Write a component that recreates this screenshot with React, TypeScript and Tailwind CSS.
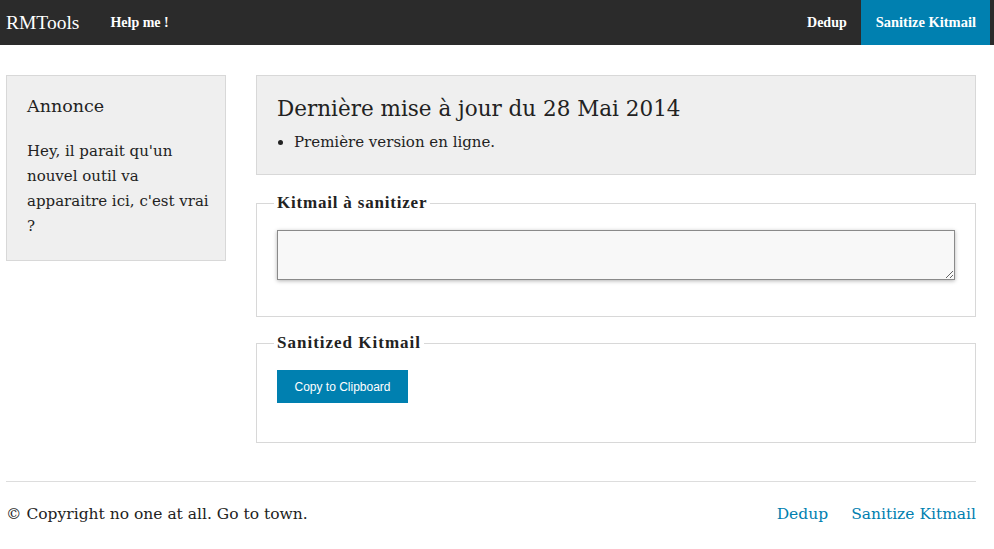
export default function App() {
  return (
    <div className="min-h-[549px] bg-white text-[#222] font-['DejaVu_Serif',serif]">
      <nav className="h-[45px] bg-[#2b2b2b] flex items-stretch pr-[4px] font-['Liberation_Serif',serif]">
        <a className="text-white text-[19.5px] flex items-center pl-[6px] pr-[31px]">RMTools</a>
        <a className="text-white text-[14px] font-bold flex items-center">Help me !</a>
        <div className="ml-auto flex items-stretch">
          <a className="text-white text-[14px] font-bold flex items-center px-[14px]">Dedup</a>
          <a className="text-white text-[14.5px] font-bold flex items-center pl-[15px] pr-[14px] bg-[#0080b0]">Sanitize Kitmail</a>
        </div>
      </nav>

      <div className="w-[970px] ml-[6px]">
        <div className="flex gap-[30px] mt-[30px] items-start">
          <aside className="w-[220px] shrink-0 bg-[#efefef] border border-[#d8d8d8] pl-[20px] pr-[14px] pt-[18px] pb-[21px]">
            <h5 className="text-[17.5px] leading-[24px] mb-[21px]">Annonce</h5>
            <p className="text-[15px] leading-[25px]">Hey, il parait qu'un nouvel outil va apparaitre ici, c'est vrai ?</p>
          </aside>

          <main className="flex-1">
            <div className="bg-[#efefef] border border-[#d8d8d8] px-[20px] h-[100px] pt-[17px]">
              <h3 className="text-[21.5px] leading-[32px]">Dernière mise à jour du 28 Mai 2014</h3>
              <ul className="list-disc pl-[17px] text-[15px] leading-[24px] mt-[5px]">
                <li>Première version en ligne.</li>
              </ul>
            </div>

            <fieldset className="border border-[#d8d8d8] mt-[18px] px-[20px] pb-[36px]">
              <legend className="font-['Liberation_Serif',serif] font-bold text-[17px] leading-[20px] px-[3px] -ml-[3px] tracking-[0.8px]">Kitmail à sanitizer</legend>
              <textarea autoFocus className="block w-full h-[50px] mt-[17px] bg-[#f8f8f8] border border-[#8a8a8a] shadow-[0_1px_4px_rgba(0,0,0,0.3)] resize-y outline-none px-2 py-2" />
            </fieldset>

            <fieldset className="border border-[#d8d8d8] mt-[16px] px-[20px] pb-[39px]">
              <legend className="font-['Liberation_Serif',serif] font-bold text-[17px] leading-[20px] px-[3px] -ml-[3px] tracking-[1px]">Sanitized Kitmail</legend>
              <button className="mt-[17px] h-[33px] w-[131px] bg-[#0080b0] text-white text-[12px] font-['Liberation_Sans',sans-serif]">Copy to Clipboard</button>
            </fieldset>
          </main>
        </div>

        <footer className="mt-[38px] border-t border-[#dddddd] pt-[20px] flex items-center text-[15.5px] leading-[24px]">
          <p>© Copyright no one at all. Go to town.</p>
          <div className="ml-auto flex gap-[23px] text-[#0080b0]">
            <a>Dedup</a>
            <a>Sanitize Kitmail</a>
          </div>
        </footer>
      </div>
    </div>
  );
}
